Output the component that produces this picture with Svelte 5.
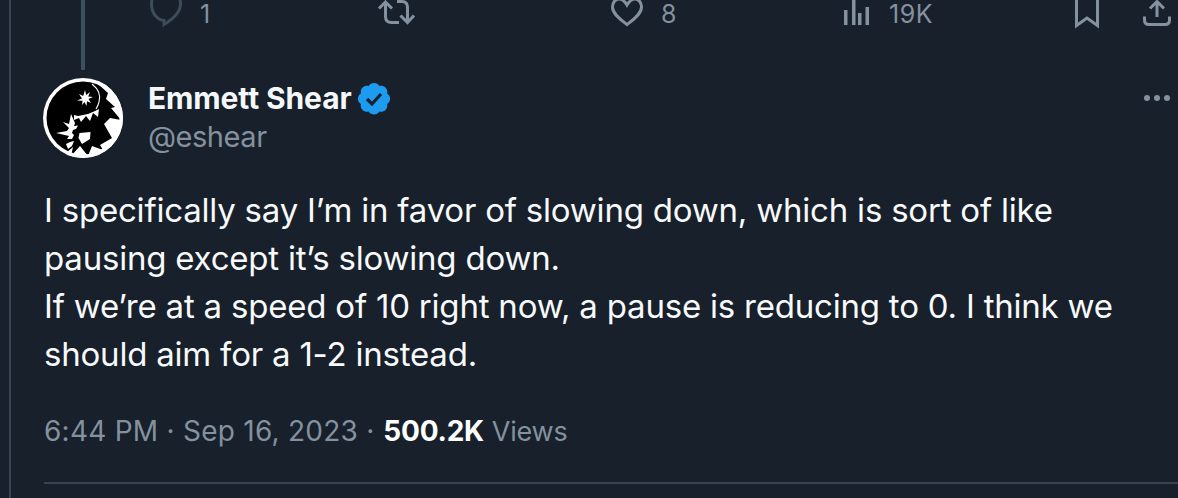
<script>
  const lines = [
    'I specifically say I’m in favor of slowing down, which is sort of like',
    'pausing except it’s slowing down.',
    'If we’re at a speed of 10 right now, a pause is reducing to 0. I think we',
    'should aim for a 1-2 instead.'
  ];
</script>

<div class="page">
  <div class="tweet">
    <div class="top">
      <div class="bar"></div>
      <div class="actions">
        <div class="action reply">
          <svg width="32" height="28" viewBox="0 0 32 28"><path class="line dim" d="M14 20.500C7 20 1.500 13 1.500 4 1.500-5 8-12 16-12S30.500-5 30.500 4C30.500 12 23 19 14 24.500Z"/></svg>
          <span>1</span>
        </div>
        <div class="action rt">
          <svg width="36" height="28" viewBox="0 0 36 28"><path class="line" d="M1 8.500 7.500 2 14 8.500M7.500 2.500V16.500Q7.500 22.500 13.500 22.500H21M19 1.500H24Q29.500 1.500 29.500 7.500V22.500M22.500 15.500 29.500 22.500 36 15.500"/></svg>
        </div>
        <div class="action like">
          <svg width="32" height="28" viewBox="0 0 32 28"><path class="line" d="M16 5C19 0 22-1 24-1 28-1 30.500 3 30.500 7 30.500 14 22 20 16 24.500 10 20 1.500 14 1.500 7 1.500 3 4-1 8-1 10-1 13 0 16 5Z"/></svg>
          <span>8</span>
        </div>
        <div class="action views">
          <svg width="25" height="28" viewBox="0 0 25 28"><path class="bars" d="M0 10h3.500v15H0zM8 0h3.500v25H8zM14 13h3.500v12H14zM21.500 7H25v18h-3.500z"/></svg>
          <span class="wide">19K</span>
        </div>
        <div class="action mark">
          <svg width="24" height="28" viewBox="0 0 24 28"><path class="line" d="M1.500-2V25.500L12 18 22.500 25.500V-2"/></svg>
        </div>
        <div class="action share">
          <svg width="28" height="26" viewBox="0 0 28 26"><path class="line" d="M14 17V2M7 8.500 14 1.500 21 8.500M1.500 16.500V20C1.500 23 3.500 24.500 6 24.500H22C24.500 24.500 26.500 23 26.500 20V16.500"/></svg>
        </div>
      </div>
    </div>

    <div class="head">
      <svg class="avatar" width="80" height="80" viewBox="0 0 80 80">
        <defs><clipPath id="disc"><circle cx="40" cy="40" r="40"/></clipPath></defs>
        <circle cx="40" cy="40" r="40" fill="#fff"/>
        <circle cx="40" cy="40" r="36.500" fill="#000"/>
        <g clip-path="url(#disc)">
          <path fill="#fff" d="M55 6 65 15 63 21 72 29 68 30 78 42 67 40 61 46 69 60 57 67 60 72 49 68 45 78 37 68 28 78 30 69 23 75 26 82H82V0H55Z"/>
          <path fill="none" stroke="#fff" stroke-width="1.100" d="M49 6Q59 14 56 24 55 28 53 31"/>
          <path fill="#fff" d="M56 31 55 39 50 35 47 43 43 38 38 44 36 40 31 42 31 37 35 38 45 36 52 33Z"/>
          <path fill="#fff" d="M42 12 43.200 17 47 14 45.200 18.500 50 19 45.500 21 48 25 44 23.300 43.500 28 41.500 24 39 27 39.500 22.800 34 22.500 39 20.500 36 16 40.200 18Z"/>
          <path fill="#fff" d="M28 36 32 45 31 48 35 47.500 33 51 30 52 29 55 31 57 29 61 24 61 26 58 13 55 24 53 26 50 20 44 26 46Z"/>
          <path fill="#fff" d="M36.500 55 47.500 54 47 61 39 66 35.500 60Z"/>
          <path fill="#fff" d="M27 64 31 63 29 68 25 71 23 66Z"/>
        </g>
      </svg>
      <div class="who">
        <div class="name">
          <span>Emmett Shear</span>
          <svg width="32" height="32" viewBox="0 0 32 32"><path fill="#1d9bf0" d="M16 0c2.500 0 4.700 1.300 5.900 3.300 2.300-.6 4.800 0 6.500 1.800 1.800 1.700 2.400 4.200 1.800 6.500 2 1.200 3.300 3.400 3.300 5.900s-1.300 4.700-3.300 5.900c.6 2.300 0 4.800-1.800 6.500-1.700 1.800-4.200 2.400-6.500 1.800-1.200 2-3.400 3.300-5.900 3.300s-4.700-1.300-5.900-3.300c-2.300.6-4.800 0-6.500-1.800-1.800-1.700-2.400-4.200-1.800-6.500-2-1.200-3.300-3.400-3.300-5.900s1.300-4.700 3.300-5.900c-.6-2.300 0-4.800 1.800-6.500 1.700-1.800 4.200-2.400 6.500-1.800C11.300 1.300 13.500 0 16 0Z" transform="translate(1.300 0) scale(.92 .9)"/><path fill="none" stroke="#17202b" stroke-width="3.200" d="M9 16l5 5 9-10"/></svg>
        </div>
        <div class="handle">@eshear</div>
      </div>
      <div class="more"><i></i><i></i><i></i></div>
    </div>

    <p class="body">
      {#each lines as l}<span>{l}</span>{/each}
    </p>

    <div class="meta"><span class="d">6:44 PM · Sep 16, 2023 ·</span> <b>500.2K</b> <span class="v">Views</span></div>
    <div class="rule"></div>
  </div>
</div>

<style>
  :global(body) { margin: 0; background: #17202b; }
  .page {
    width: 1178px; height: 498px; overflow: hidden;
    background: #17202b; color: #f5f8fa;
    font-family: Inter, "Liberation Sans", sans-serif;
  }
  .tweet {
    margin-left: 9px; border-left: 2px solid #37444f;
    padding-left: 33px; height: 498px;
  }
  .top { display: flex; height: 70px; }
  .bar { width: 4px; height: 70px; background: #3e4f5f; margin-left: 37px; flex: none; }
  .actions { flex: 1; display: flex; align-items: flex-start; margin-left: 65px; height: 28px; color: #84919e; font-size: 25px; line-height: 28px; }
  .action { display: flex; align-items: flex-start; flex: none; }
  .action svg { display: block; overflow: visible; flex: none; }
  .action span { letter-spacing: -0.5px; }
  .action span.wide { letter-spacing: 0.6px; }
  .reply { width: 228px; gap: 18px; }
  .rt { width: 233px; }
  .like { width: 233px; gap: 18px; }
  .views { width: 231px; gap: 20px; }
  .mark { width: 68px; }
  .line { fill: none; stroke: #84919e; stroke-width: 3; }
  .line.dim { stroke: #3e4c59; }
  .bars { fill: #84919e; }
  .head { display: flex; align-items: flex-start; height: 80px; margin-top: 8px; }
  .avatar { flex: none; display: block; margin-left: -1px; }
  .who { margin-left: 25px; margin-top: 2px; }
  .name { display: flex; align-items: center; gap: 6px; font-size: 30px; font-weight: 700; line-height: 36px; letter-spacing: -0.12px; }
  .name svg { display: block; margin-top: 1px; }
  .handle { font-size: 29px; line-height: 36px; color: #84919e; letter-spacing: -0.45px; margin-top: 3px; }
  .more { margin-left: auto; margin-right: 8px; margin-top: 17px; display: flex; gap: 4px; }
  .more i { width: 6px; height: 6px; border-radius: 50%; background: #84919e; display: block; }
  .body { margin: 28px 0 0; font-size: 33px; line-height: 48px; color: #f7f9fa; letter-spacing: -0.21px; }
  .body span { display: block; white-space: nowrap; }
  .meta { margin-top: 35px; font-size: 28px; line-height: 36px; color: #84919e; letter-spacing: -0.2px; white-space: nowrap; }
  .d { letter-spacing: 0.25px; }
  .meta b { color: #fff; font-weight: 700; margin-left: 1px; }
  .v { font-size: 27px; }
  .rule { height: 2px; background: #37444f; margin-top: 32px; }
</style>
